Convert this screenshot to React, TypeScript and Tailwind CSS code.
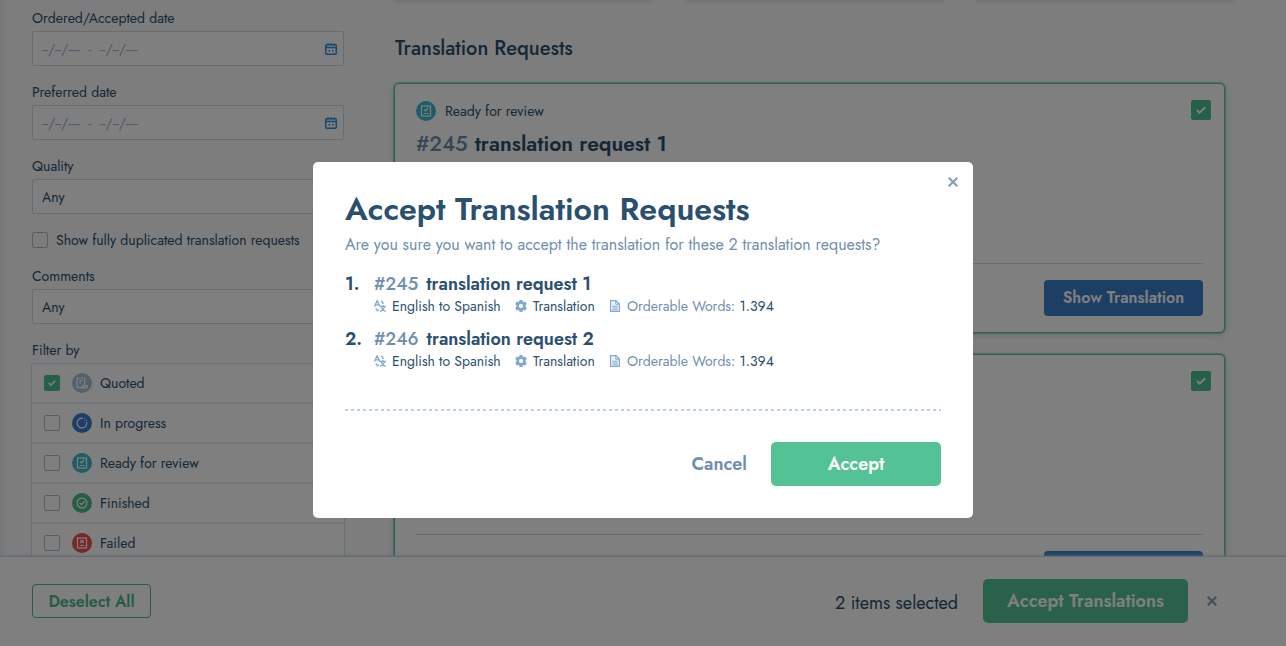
import { useId, type ReactNode } from "react";

function CalendarIcon() {
  return (
    <svg viewBox="0 0 12 12" className="size-3" fill="none" stroke="#2f8fe0">
      <rect x="0.75" y="1.75" width="10.5" height="9.5" rx="1" strokeWidth="1.5" />
      <path d="M1 4.5h10M3 0.3v2M6 0.3v2M9 0.3v2" strokeWidth="1.5" />
      <path d="M3.4 7.8h1.6M7 7.8h1.6" strokeWidth="1.5" />
    </svg>
  );
}

function CloseIcon() {
  return (
    <svg viewBox="0 0 10 10" className="size-2.5" stroke="#8a9fb8" strokeWidth="2.2" fill="none">
      <path d="M0.7 0.7l8.6 8.6M9.3 0.7l-8.6 8.6" />
    </svg>
  );
}

function LanguageIcon() {
  return (
    <svg viewBox="0 0 12 12" className="size-3" fill="none" stroke="#82a9cf" strokeWidth="1.3">
      <path d="M0.5 6.8L3 0.9h0.4L5.9 6.8M1.5 4.8h3.4" />
      <path d="M6.6 1.3h2.2v2.2M7.6 2.7l1.2 1.2 1.2-1.2" strokeWidth="1" />
      <path d="M2.2 8v2.3h2.2M3.5 9.1l1.2 1.2-1.2 1.2" strokeWidth="1" />
      <path d="M5.9 6.3h6M8.9 4.9v1.3M7.2 6.4c.6 2.6 2.2 4.2 4.5 5.1M10.6 6.4c-.6 2.6-2.4 4.2-4.7 5.1" strokeWidth="1.2" />
    </svg>
  );
}

function GearIcon() {
  return (
    <svg viewBox="0 0 12 12" className="size-3">
      <path
        fill="#82a9cf"
        fillRule="evenodd"
        d="M4.6 0h2.8l.4 1.6.9.5 1.6-.5 1.5 2.5-1.2 1.2v1.4l1.2 1.2-1.5 2.5-1.6-.5-.9.5-.4 1.6H4.6l-.4-1.6-.9-.5-1.6.5L.2 7.900l1.2-1.2V5.300L.2 4.100l1.5-2.5 1.6.5.9-.5zM6 3.900a2.1 2.1 0 100 4.2 2.1 2.1 0 000-4.2z"
      />
    </svg>
  );
}

function DocumentIcon() {
  return (
    <svg viewBox="0 0 10 12" className="h-3 w-2.5" fill="none" stroke="#82a9cf" strokeWidth="1.2">
      <path d="M0.6 0.6h5.4l3.4 3.4v7.4H0.6z" fill="#eef4fa" />
      <path d="M5.8 0.8v3.4h3.4M2.4 6.2h5.2M2.4 8h5.2M2.4 9.8h5.2" strokeWidth="1" />
    </svg>
  );
}

type Status = "quoted" | "progress" | "review" | "finished" | "failed";

const statusColor: Record<Status, string> = {
  quoted: "bg-[#a9c1d6]",
  progress: "bg-[#3b7dd0]",
  review: "bg-[#3cb9cd]",
  finished: "bg-[#4cba8a]",
  failed: "bg-[#f04e4e]",
};

const statusDrawing: Record<Status, ReactNode> = {
  quoted: (
    <>
      <path d="M1 10.8V1h7.6v7.6" />
      <path d="M0.4 10.6h6V8.800h5v.5c0 .9-.5 1.5-1.3 1.5H6M3.300 3.700h3M3.300 5.900h2" />
    </>
  ),
  progress: (
    <>
      <path d="M10.8 5.2A4.9 4.9 0 116.8 1.2" />
      <path d="M8.3 1.7l.9.5M10 3.2l.5.9" />
    </>
  ),
  review: (
    <>
      <rect x="1.5" y="1" width="9" height="10" />
      <path d="M4 4.3l1.5 1.5L8.3 3M3.7 8.5h4.6" />
    </>
  ),
  finished: (
    <>
      <circle cx="6" cy="6" r="4.9" />
      <path d="M3.7 6l1.7 1.7 3.2-3.2" />
    </>
  ),
  failed: (
    <>
      <rect x="1.5" y="1" width="9" height="10" />
      <path d="M4.3 3l3.4 3M7.7 3L4.3 6M3.7 8.5h4.6" />
    </>
  ),
};

function StatusIcon({ status }: { status: Status }) {
  return (
    <span className={`flex size-5 shrink-0 items-center justify-center rounded-full ${statusColor[status]}`}>
      <svg viewBox="0 0 12 12" className="size-3" fill="none" stroke="#fff" strokeWidth="1.2">
        {statusDrawing[status]}
      </svg>
    </span>
  );
}

function Checkbox({ id, checked, large, label }: { id?: string; checked?: boolean; large?: boolean; label?: string }) {
  return (
    <span className={`relative flex shrink-0 ${large ? "size-5" : "size-4"}`}>
      <input
        id={id}
        type="checkbox"
        aria-label={label}
        defaultChecked={checked}
        className="peer size-full appearance-none rounded-xs border border-[#aebdd0] checked:border-[#4fc091] checked:bg-[#4fc091]"
      />
      <svg
        viewBox="0 0 10 10"
        className={`pointer-events-none absolute inset-0 m-auto hidden peer-checked:block ${large ? "size-2.5" : "size-2"}`}
        fill="none"
        stroke="#fff"
        strokeWidth="2"
      >
        <path d="M0.9 5l2.7 2.7L9.2 2.2" />
      </svg>
    </span>
  );
}

function DateField({ label }: { label: string }) {
  const id = useId();
  return (
    <div className="flex flex-col gap-[3px]">
      <label htmlFor={id} className="leading-5">{label}</label>
      <div className="flex h-[35px] items-center rounded-xs border border-[#cbdae8] bg-white pr-1.5 pl-[9px]">
        <input
          id={id}
          type="text"
          placeholder="--/--/----  -  --/--/----"
          className="min-w-0 flex-1 bg-transparent outline-none placeholder:text-[#9bb8d3]"
        />
        <button type="button" aria-label={`Pick ${label}`}>
          <CalendarIcon />
        </button>
      </div>
    </div>
  );
}

function SelectField({ label }: { label: string }) {
  const id = useId();
  return (
    <div className="flex flex-col gap-[3px]">
      <label htmlFor={id} className="leading-5">{label}</label>
      <select id={id} className="h-[35px] appearance-none rounded-xs border border-[#cbdae8] bg-white px-[9px]">
        <option>Any</option>
      </select>
    </div>
  );
}

const filters: { status: Status; label: string; checked?: boolean }[] = [
  { status: "quoted", label: "Quoted", checked: true },
  { status: "progress", label: "In progress" },
  { status: "review", label: "Ready for review" },
  { status: "finished", label: "Finished" },
  { status: "failed", label: "Failed" },
];

function Sidebar() {
  return (
    <aside className="flex w-[376px] shrink-0 flex-col gap-4 px-8 pt-2 text-sm shadow-[inset_6px_0_6px_-4px_#dfe8ea]">
      <DateField label="Ordered/Accepted date" />
      <DateField label="Preferred date" />
      <SelectField label="Quality" />
      <div className="flex h-5 items-center gap-2">
        <Checkbox id="duplicated" />
        <label htmlFor="duplicated">Show fully duplicated translation requests</label>
      </div>
      <SelectField label="Comments" />
      <fieldset>
        <legend className="pb-[3px] leading-5">Filter by</legend>
        <ul className="-mx-px rounded-xs border border-[#d3dfea] bg-white">
          {filters.map((f) => (
            <li key={f.status} className="flex h-10 items-center border-b-2 border-[#e6eef5] px-3">
              <Checkbox id={f.status} checked={f.checked} />
              <label htmlFor={f.status} className="flex items-center gap-2 pl-3">
                <StatusIcon status={f.status} />
                {f.label}
              </label>
            </li>
          ))}
        </ul>
      </fieldset>
    </aside>
  );
}

function RequestCard({ id, title }: { id: string; title: string }) {
  return (
    <article className="flex h-[250px] shrink-0 flex-col rounded-[5px] border border-[#54c495] bg-white px-[21px] py-4 shadow-[0_0_0_1px_#54c49580,0_2px_6px_1px_#d5dfea]">
      <div className="flex items-start justify-between">
        <div>
          <p className="flex h-[22px] items-center gap-[9px] text-sm">
            <StatusIcon status="review" />
            Ready for review
          </p>
          <h3 className="mt-1.5 flex gap-[7px] text-[21px] leading-8 font-semibold">
            <span className="font-medium text-[#6f8dae]">{id}</span>
            {title}
          </h3>
        </div>
        <div className="-mr-2">
          <Checkbox checked large label={`Select ${title}`} />
        </div>
      </div>
      <div className="mt-auto flex justify-end border-t border-[#c9d8e6] pt-4">
        <button type="button" className="h-9 w-[159px] rounded-sm bg-[#3b7dcb] font-semibold text-white">
          Show Translation
        </button>
      </div>
    </article>
  );
}

function ModalItem({ index, id, title }: { index: number; id: string; title: string }) {
  return (
    <li className="grid grid-cols-[29px_1fr] text-lg leading-6 font-semibold">
      <span>{index}.</span>
      <div>
        <p className="flex gap-2">
          <span className="font-medium text-[#6f8fb1]">{id}</span>
          {title}
        </p>
        <div className="grid grid-cols-[141px_95px_auto] text-sm leading-5 font-normal">
          <span className="flex items-center gap-1.5">
            <LanguageIcon />
            English to Spanish
          </span>
          <span className="flex items-center gap-1.5">
            <GearIcon />
            Translation
          </span>
          <span className="flex items-center gap-[7px]">
            <DocumentIcon />
            <span>
              <span className="text-[#6f8fb1]">Orderable Words:</span> 1.394
            </span>
          </span>
        </div>
      </div>
    </li>
  );
}

function AcceptModal() {
  return (
    <div className="fixed inset-0 flex items-center justify-center bg-black/50 pt-[34px]">
      <section
        role="dialog"
        aria-modal="true"
        aria-labelledby="accept-title"
        className="relative w-full max-w-[660px] rounded-[5px] bg-white px-8 pt-6 pb-8"
      >
        <button type="button" aria-label="Close" className="absolute top-[15px] right-[15px]">
          <CloseIcon />
        </button>
        <h1 id="accept-title" className="text-[32px] leading-[47px] font-semibold">
          Accept Translation Requests
        </h1>
        <p className="leading-6 text-[#6f8fb1]">
          Are you sure you want to accept the translation for these 2 translation requests?
        </p>
        <ol className="mt-[15px] flex flex-col gap-[11px]">
          <ModalItem index={1} id="#245" title="translation request 1" />
          <ModalItem index={2} id="#246" title="translation request 2" />
        </ol>
        <div className="mt-[38px] h-0.5 bg-[repeating-linear-gradient(90deg,#b9d0e6_0_3px,transparent_3px_6px)]" />
        <div className="mt-[31px] flex justify-end gap-6 text-lg font-semibold">
          <button type="button" className="text-[#6f8fb1]">Cancel</button>
          <button type="button" className="h-11 w-[170px] rounded-[5px] bg-[#53c397] text-white">
            Accept
          </button>
        </div>
      </section>
    </div>
  );
}

export default function App() {
  return (
    <div className="flex h-screen flex-col overflow-hidden bg-[#fafbfd] font-['Jost',Lato,sans-serif] text-[#2b4f6f]">
      <div className="flex min-h-0 flex-1 overflow-hidden">
        <Sidebar />
        <main className="flex min-w-0 flex-1 flex-col pr-[51px] pl-[18px]">
          <div className="grid grid-cols-3 gap-9 px-0.5">
            <div className="h-0 shadow-[0_0_4px_2px_#d5e0e8]" />
            <div className="h-0 shadow-[0_0_4px_2px_#d5e0e8]" />
            <div className="h-0 shadow-[0_0_4px_2px_#d5e0e8]" />
          </div>
          <h2 className="mt-[35px] pl-px text-xl font-medium">Translation Requests</h2>
          <div className="mt-5 mr-2.5 flex flex-col gap-[21px]">
            <RequestCard id="#245" title="translation request 1" />
            <RequestCard id="#246" title="translation request 2" />
          </div>
        </main>
      </div>
      <footer className="flex h-[90px] shrink-0 items-center border-t border-[#cbd8e5] bg-white pr-[69px] pb-0.5 pl-8 shadow-[0_0_4px_#c9d7e4]">
        <button
          type="button"
          className="h-[34px] w-[119px] rounded-sm border border-[#4cb88a] pt-0.5 font-semibold text-[#4cb88a]"
        >
          Deselect All
        </button>
        <span className="mr-[25px] ml-auto pt-1 text-lg">2 items selected</span>
        <button type="button" className="h-11 w-[205px] rounded-[5px] bg-[#53c397] text-lg font-semibold text-white">
          Accept Translations
        </button>
        <button type="button" aria-label="Clear selection" className="ml-[19px]">
          <CloseIcon />
        </button>
      </footer>
      <AcceptModal />
    </div>
  );
}
